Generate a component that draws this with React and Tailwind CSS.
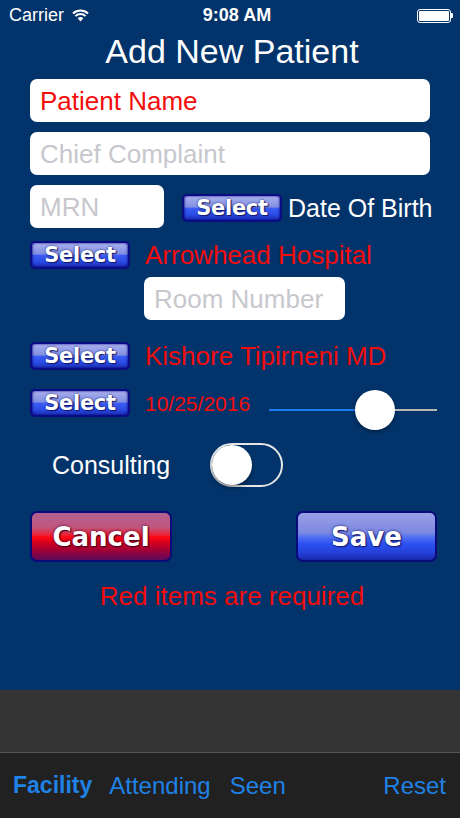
import React from "react";

const font = { fontFamily: '"Liberation Sans", Arial, sans-serif' };
const glossFont = { fontFamily: '"DejaVu Sans", Verdana, sans-serif' };

function Wifi() {
  return (
    <svg width="17" height="13" viewBox="0 0 17 13" className="ml-[8px]">
      <path d="M8.5 12.5 L5.6 9.3 A4.2 4.2 0 0 1 11.4 9.3 Z" fill="white" />
      <path d="M3.4 7.1 A7.3 7.3 0 0 1 13.6 7.1" stroke="white" strokeWidth="2" fill="none" />
      <path d="M1 4.5 A10.8 10.8 0 0 1 16 4.5" stroke="white" strokeWidth="2" fill="none" />
    </svg>
  );
}

function Battery() {
  return (
    <div className="flex items-center mr-[7px]">
      <div className="w-[34px] h-[14px] rounded-[3px] border border-white p-[1px]">
        <div className="w-full h-full bg-white rounded-[1px]" />
      </div>
      <div className="w-[2px] h-[5px] bg-white rounded-r-[1px]" />
    </div>
  );
}

function SelectBtn() {
  return (
    <div
      className="w-[100px] h-[28px] rounded-[5px] border-2 border-[#0b0b86] flex items-center justify-center text-white font-bold text-[21px] leading-none shrink-0 tracking-[-0.3px]"
      style={{
        ...glossFont,
        background:
          "linear-gradient(to bottom, #aab0ee 0%, #8390e2 45%, #3a5cf2 52%, #2b4be6 78%, #1a2cb0 100%)",
        textShadow: "0 0 2px #10186a, 1px 1px 1px #10186a",
        boxShadow: "inset 1px 0 2px rgba(10,10,120,0.6), inset -1px 0 2px rgba(10,10,120,0.6)",
      }}
    >
      Select
    </div>
  );
}

function Field({ children, className = "", red }) {
  return (
    <div
      className={`h-[43px] bg-white rounded-[7px] flex items-center px-[10px] text-[26px] leading-none whitespace-nowrap ${red ? "text-[#f20d0d]" : "text-[#c7c7cd]"} ${className}`}
    >
      {children}
    </div>
  );
}

export default function App() {
  return (
    <div className="w-[460px] h-[818px] flex flex-col bg-[#02336a] overflow-hidden" style={font}>
      <div className="flex-1 flex flex-col">
        {/* status bar */}
        <div className="h-[31px] flex items-center text-white">
          <div className="flex-1 flex items-center pl-[9px] text-[18px]">
            Carrier
            <Wifi />
          </div>
          <div className="flex-1 text-center text-[18px] font-semibold pl-[5px]">9:08 AM</div>
          <div className="flex-1 flex justify-end">
            <Battery />
          </div>
        </div>

        {/* title */}
        <div className="text-white text-[34px] leading-[40px] text-center pl-[4px]">Add New Patient</div>

        <div className="px-[30px] flex flex-col">
          <Field className="mt-[8px]" red>Patient Name</Field>
          <Field className="mt-[10px]">Chief Complaint</Field>

          <div className="mt-[10px] flex items-center whitespace-nowrap mr-[-20px]">
            <Field className="w-[134px]">MRN</Field>
            <div className="ml-[18px] mt-[3px]">
              <SelectBtn />
            </div>
            <div className="ml-[6px] mt-[3px] text-white text-[25px] leading-none">Date Of Birth</div>
          </div>

          <div className="mt-[13px] h-[28px] flex items-center whitespace-nowrap">
            <SelectBtn />
            <div className="ml-[15px] text-[#f20d0d] text-[26px] leading-none">Arrowhead Hospital</div>
          </div>

          <Field className="mt-[8px] ml-[114px] w-[201px]">Room Number</Field>

          <div className="mt-[22px] h-[28px] flex items-center whitespace-nowrap">
            <SelectBtn />
            <div className="ml-[15px] text-[#f20d0d] text-[26px] leading-none">Kishore Tipirneni MD</div>
          </div>

          <div className="mt-[19px] h-[28px] flex items-center mr-[-7px]">
            <SelectBtn />
            <div className="ml-[15px] text-[#f20d0d] text-[21px] leading-none">10/25/2016</div>
            <div className="ml-[19px] mt-[14px] w-[169px] h-[40px] flex items-center">
              <div className="w-[86px] h-[2px] bg-[#1a7cf5]" />
              <div
                className="w-[40px] h-[40px] rounded-full bg-white shrink-0"
                style={{ boxShadow: "0 2px 4px rgba(0,0,0,0.35)" }}
              />
              <div className="flex-1 h-[2px] bg-[#b6b6b6]" />
            </div>
          </div>

          <div className="mt-[26px] h-[44px] flex items-center">
            <div className="ml-[22px] text-white text-[25px] leading-none">Consulting</div>
            <div className="ml-[40px] w-[73px] h-[44px] rounded-full border-2 border-[#e6e6e6] flex items-center">
              <div
                className="w-[40px] h-[40px] rounded-full bg-white"
                style={{ boxShadow: "0 3px 4px rgba(0,0,0,0.35)" }}
              />
            </div>
          </div>

          <div className="mt-[24px] flex justify-between mr-[-7px]">
            <div
              className="w-[142px] h-[51px] rounded-[7px] border-2 border-[#0a0a7a] flex items-center justify-center text-white font-bold text-[26px] leading-none"
              style={{
                ...glossFont,
                background:
                  "linear-gradient(to bottom, #b3628f 0%, #c05680 30%, #e8283c 45%, #ff0514 52%, #d8001c 62%, #a00038 80%, #5a0a5c 100%)",
                textShadow: "0 0 3px #400020, 1px 1px 1px #400020",
              }}
            >
              Cancel
            </div>
            <div
              className="w-[141px] h-[51px] rounded-[7px] border-2 border-[#0a0a7a] flex items-center justify-center text-white font-bold text-[26px] leading-none"
              style={{
                ...glossFont,
                background:
                  "linear-gradient(to bottom, #9aa0e6 0%, #7c88e2 42%, #5673f0 50%, #2e52f2 65%, #2440d8 85%, #1a28a8 100%)",
                textShadow: "0 0 3px #101870, 1px 1px 1px #101870",
              }}
            >
              Save
            </div>
          </div>

          <div className="mt-[19px] text-center text-[#f20d0d] text-[26px] leading-[30px] pl-[4px]">
            Red items are required
          </div>
        </div>
      </div>

      <div className="h-[62px] bg-[#343434] shrink-0" />
      <div className="h-[1px] bg-[#555555] shrink-0" />
      <div className="h-[65px] bg-[#212121] shrink-0 flex items-center text-[#1f82e6] text-[24px] leading-none">
        <div className="ml-[13px] font-bold text-[23px]">Facility</div>
        <div className="ml-[17px]">Attending</div>
        <div className="ml-[19px]">Seen</div>
        <div className="ml-auto mr-[14px]">Reset</div>
      </div>
    </div>
  );
}
